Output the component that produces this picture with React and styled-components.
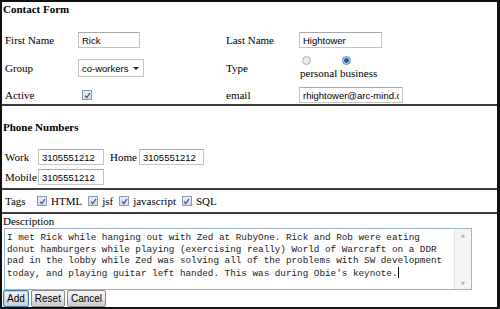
import React from 'react'
import styled, { createGlobalStyle } from 'styled-components'

const Global = createGlobalStyle`
  html, body {
    margin: 0;
    padding: 0;
    background: #fff;
  }
  body {
    font-family: "Liberation Serif", "Times New Roman", serif;
    font-size: 11px;
    color: #000;
  }
`

const description = [
  'I met Rick while hanging out with Zed at RubyOne. Rick and Rob were eating',
  'donut hamburgers while playing (exercising really) World of Warcraft on a DDR',
  'pad in the lobby while Zed was solving all of the problems with SW development',
  "today, and playing guitar left handed. This was during Obie's keynote.",
]

const App = () => {
  return (
    <>
      <Global />
      <Form>
        <Section height={104}>
          <Title>Contact Form</Title>
          <ContactGrid>
            <Label>First Name</Label>
            <Field><TextInput width={62} defaultValue="Rick" /></Field>
            <Label>Last Name</Label>
            <Field><TextInput width={83} defaultValue="Hightower" /></Field>

            <Label>Group</Label>
            <Field>
              <Select>
                <span>co-workers</span>
                <Arrow />
              </Select>
            </Field>
            <Label>Type</Label>
            <TypeBox>
              <Radios>
                <Radio />
                <Radio checked />
              </Radios>
              <span>personal business</span>
            </TypeBox>

            <Label>Active</Label>
            <Field><Check indent={4} /></Field>
            <Label>email</Label>
            <Field><TextInput width={104} defaultValue="rhightower@arc-mind.com" /></Field>
          </ContactGrid>
        </Section>

        <Section height={84}>
          <Title top={14}>Phone Numbers</Title>
          <PhoneRows>
            <Row>
              <Label width={33}>Work</Label>
              <TextInput width={66} defaultValue="3105551212" />
              <Label width={29} left={6}>Home</Label>
              <TextInput width={65} defaultValue="3105551212" />
            </Row>
            <Row>
              <Label width={33}>Mobile</Label>
              <TextInput width={66} defaultValue="3105551212" />
            </Row>
          </PhoneRows>
        </Section>

        <Section height={24}>
          <TagRow>
            <Label width={32}>Tags</Label>
            <Tag><Check />HTML</Tag>
            <Tag><Check />jsf</Tag>
            <Tag><Check />javascript</Tag>
            <Tag><Check />SQL</Tag>
          </TagRow>
        </Section>

        <LastSection>
          <Caption>Description</Caption>
          <TextBox>
            <TextBody>
              {description.map((line, i) => (
                <TextLine key={i}>
                  {line}
                  {i === description.length - 1 && <Caret />}
                </TextLine>
              ))}
            </TextBody>
            <ScrollBar>
              <ScrollArrow>&#9650;</ScrollArrow>
              <ScrollArrow>&#9660;</ScrollArrow>
            </ScrollBar>
          </TextBox>
          <Buttons>
            <Button focused>Add</Button>
            <Button>Reset</Button>
            <Button>Cancel</Button>
          </Buttons>
        </LastSection>
      </Form>
    </>
  )
}

export default App

const Form = styled.div`
width: 500px;
height: 309px;
box-sizing: border-box;
border: 2px solid #111;
border-right-width: 3px;
display: flex;
flex-direction: column;
overflow: hidden;
`

const Section = styled.div`
height: ${p => p.height}px;
flex-shrink: 0;
box-sizing: border-box;
border-bottom: 2px solid #3a3a3a;
padding-left: 1px;
`

const LastSection = styled.div`
flex: 1;
display: flex;
flex-direction: column;
padding-left: 1px;
`

const Title = styled.div`
font-weight: bold;
font-size: 11px;
line-height: 14px;
margin-top: ${p => p.top || 0}px;
`

const ContactGrid = styled.div`
display: grid;
grid-template-columns: 73px 148px 73px 1fr;
grid-template-rows: 20px 26px 18px;
row-gap: 5px;
margin-top: 14px;
padding-left: 2px;
align-items: center;
`

const Label = styled.span`
display: inline-block;
width: ${p => (p.width ? p.width + 'px' : 'auto')};
margin-left: ${p => p.left || 0}px;
flex-shrink: 0;
font-size: 11px;
line-height: 14px;
`

const Field = styled.div`
display: flex;
align-items: center;
`

const TextInput = styled.input`
width: ${p => p.width}px;
height: 16px;
box-sizing: border-box;
border: 1px solid #c4c4c4;
border-top-color: #a9a9a9;
padding: 0 3px;
font-family: "Liberation Sans", Arial, sans-serif;
font-size: 9.5px;
color: #000;
background: #fff;
outline: none;
`

const Select = styled.div`
width: 66px;
height: 18px;
box-sizing: border-box;
border: 1px solid #c4c4c4;
display: flex;
align-items: center;
justify-content: space-between;
padding: 0 4px 0 3px;
font-family: "Liberation Sans", Arial, sans-serif;
font-size: 9.5px;
`

const Arrow = styled.span`
width: 0;
height: 0;
border-left: 3px solid transparent;
border-right: 3px solid transparent;
border-top: 3px solid #222;
`

const TypeBox = styled.div`
display: flex;
flex-direction: column;
align-items: flex-start;
padding-left: 1px;
line-height: 13px;
`

const Radios = styled.div`
display: flex;
gap: 31px;
padding-left: 2px;
margin-bottom: 2px;
`

const Radio = styled.span`
width: 9px;
height: 9px;
box-sizing: border-box;
border-radius: 50%;
border: 1px solid ${p => (p.checked ? '#5a8fbf' : '#b0b0b0')};
background: ${p =>
  p.checked
    ? 'radial-gradient(circle, #1d5c91 0 2px, #9cc4e4 2.5px, #e4eef7 100%)'
    : 'radial-gradient(circle, #f4f4f4, #dcdcdc)'};
`

const CheckBox = styled.span`
display: inline-flex;
align-items: center;
justify-content: center;
width: 10px;
height: 10px;
box-sizing: border-box;
margin-left: ${p => p.indent || 0}px;
border: 1px solid #8e9aa8;
background: linear-gradient(#e9eef4, #d6dde6);
flex-shrink: 0;
`

const Check = ({ indent }) => (
  <CheckBox indent={indent}>
    <svg width="7" height="7" viewBox="0 0 7 7">
      <path d="M1 3.6 L2.8 5.6 L6 1" fill="none" stroke="#2b4f9a" strokeWidth="1.2" />
    </svg>
  </CheckBox>
)

const PhoneRows = styled.div`
display: flex;
flex-direction: column;
gap: 4px;
margin-top: 15px;
padding-left: 2px;
`

const Row = styled.div`
display: flex;
align-items: center;
height: 16px;
`

const TagRow = styled.div`
display: flex;
align-items: center;
height: 22px;
padding-left: 2px;
`

const Tag = styled.span`
display: inline-flex;
align-items: center;
gap: 4px;
margin-right: 6px;
font-size: 11px;
`

const Caption = styled.div`
font-size: 11px;
line-height: 12px;
margin-top: 1px;
`

const TextBox = styled.div`
width: 468px;
height: 62px;
box-sizing: border-box;
border: 1px solid #9db4cc;
margin-left: 1px;
margin-top: 1px;
display: flex;
background: #fff;
overflow: hidden;
`

const TextBody = styled.div`
flex: 1;
min-width: 0;
padding: 3px 2px 0 2px;
font-family: "Liberation Mono", "Courier New", monospace;
font-size: 9.3px;
line-height: 11.5px;
color: #222;
`

const TextLine = styled.div`
white-space: pre;
`

const Caret = styled.span`
display: inline-block;
width: 1px;
height: 11px;
background: #000;
vertical-align: -2px;
`

const ScrollBar = styled.div`
width: 16px;
flex-shrink: 0;
background: #f3f3f3;
border-left: 1px solid #e4e4e4;
display: flex;
flex-direction: column;
justify-content: space-between;
align-items: center;
padding: 3px 0;
`

const ScrollArrow = styled.span`
font-size: 5px;
color: #b0b0b0;
font-family: "DejaVu Sans", sans-serif;
`

const Buttons = styled.div`
display: flex;
gap: 2px;
`

const Button = styled.button`
height: 17px;
box-sizing: border-box;
padding: 0 3px;
border: 1px solid ${p => (p.focused ? '#3c7fb1' : '#8a8a8a')};
box-shadow: ${p => (p.focused ? 'inset 0 0 0 1px #a8d8f0' : 'none')};
border-radius: 2px;
background: linear-gradient(#f2f2f2 0%, #ebebeb 50%, #dddddd 51%, #cfcfcf 100%);
font-family: "Liberation Sans", Arial, sans-serif;
font-size: 10px;
color: #000;
line-height: 1;
`
